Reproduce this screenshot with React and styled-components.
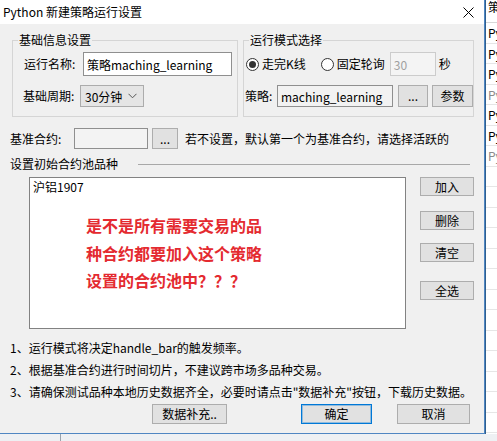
import styled, { createGlobalStyle } from 'styled-components';

const GlobalStyle = createGlobalStyle`
  html, body {
    margin: 0;
    padding: 0;
    background: #ffffff;
  }
  body {
    font-family: "Noto Sans CJK SC", "Noto Sans", sans-serif;
    font-size: 12px;
    color: #000;
  }
`;

const Screen = styled.div`
  width: 497px;
  height: 441px;
  overflow: hidden;
  display: grid;
  grid-template-columns: 485px 12px;
  grid-template-rows: 434px 7px;
`;

const Window = styled.div`
  background: #f0f0f0;
  border-right: 1px solid #4f86c2;
  border-bottom: 1px solid #4f86c2;
  display: flex;
  flex-direction: column;
  overflow: hidden;
`;

const TitleBar = styled.div`
  height: 24px;
  flex: none;
  background: #ffffff;
  display: flex;
  align-items: center;
  justify-content: space-between;
  padding: 0 10px 0 3px;
  line-height: 16px;
`;

const Body = styled.div`
  padding: 0 10px;
  display: flex;
  flex-direction: column;
`;

const TopRow = styled.div`
  display: flex;
  gap: 5px;
  padding-left: 2px;
  margin-top: 16px;
`;

const GroupBox = styled.div`
  box-sizing: border-box;
  width: ${p => p.$w}px;
  height: 77px;
  border: 1px solid #d5d5d5;
  display: flex;
  flex-direction: column;
`;

const Legend = styled.div`
  align-self: flex-start;
  height: 16px;
  line-height: 16px;
  margin: -9px 0 0 5px;
  padding: 0 1px;
  background: #f0f0f0;
`;

const FormRow = styled.div`
  display: flex;
  align-items: center;
  height: ${p => p.$h}px;
  margin-top: ${p => p.$mt}px;
  padding-left: ${p => p.$pl}px;
`;

const Label = styled.span`
  width: ${p => (p.$w ? `${p.$w}px` : 'auto')};
  flex: none;
  white-space: nowrap;
  line-height: 16px;
`;

const TextBox = styled.div`
  box-sizing: border-box;
  width: ${p => p.$w}px;
  height: ${p => p.$h}px;
  border: 1px solid ${p => (p.$light ? '#cccccc' : '#8f8f8f')};
  background: ${p => p.$bg || '#ffffff'};
  color: ${p => (p.$muted ? '#a0a0a0' : '#000')};
  display: flex;
  align-items: center;
  padding-left: 3px;
  white-space: nowrap;
  overflow: hidden;
  flex: none;
`;

const Select = styled.div`
  box-sizing: border-box;
  width: 64px;
  height: 22px;
  border: 1px solid #acacac;
  background: #e5e5e5;
  display: flex;
  align-items: center;
  justify-content: space-between;
  padding: 0 6px 0 4px;
`;

const Button = styled.div`
  box-sizing: border-box;
  width: ${p => p.$w}px;
  height: ${p => p.$h || 20}px;
  margin-left: ${p => p.$ml || 0}px;
  margin-top: ${p => p.$mt || 0}px;
  background: #e1e1e1;
  border: 1px solid ${p => (p.$primary ? '#0078d7' : '#adadad')};
  box-shadow: ${p => (p.$primary ? 'inset 0 0 0 1px rgba(0,120,215,0.35)' : 'none')};
  display: flex;
  align-items: center;
  justify-content: center;
  line-height: 14px;
  white-space: nowrap;
  flex: none;
`;

const Radio = styled.span`
  box-sizing: border-box;
  width: 13px;
  height: 13px;
  border-radius: 50%;
  border: 1px solid #333333;
  background: #ffffff;
  display: inline-flex;
  align-items: center;
  justify-content: center;
  margin-right: 3px;
  flex: none;
  &::after {
    content: '';
    width: 7px;
    height: 7px;
    border-radius: 50%;
    background: ${p => (p.$checked ? '#333333' : 'transparent')};
  }
`;

const RadioItem = styled.div`
  display: flex;
  align-items: center;
  margin-right: ${p => p.$mr}px;
  line-height: 16px;
`;

const Hint = styled.span`
  margin-left: 7px;
  white-space: nowrap;
  line-height: 16px;
`;

const Section = styled.div`
  display: flex;
  align-items: center;
  height: 16px;
  margin-top: 7px;
`;

const Rule = styled.div`
  width: 332px;
  height: 1px;
  margin-left: 20px;
  background: #a8a8a8;
`;

const Pool = styled.div`
  display: flex;
  margin-top: 5px;
  padding-left: 19px;
`;

const ListBox = styled.div`
  box-sizing: border-box;
  width: 377px;
  height: 152px;
  background: #ffffff;
  border: 1px solid #828282;
  padding: 2px 3px;
`;

const ListItem = styled.div`
  line-height: 14px;
`;

const Question = styled.div`
  margin: 18px 0 0 53px;
  color: #e42a30;
  font-weight: 700;
  font-size: 16px;
  line-height: 27.5px;
  width: 180px;
`;

const SideButtons = styled.div`
  display: flex;
  flex-direction: column;
  margin-left: 14px;
`;

const Notes = styled.div`
  margin-top: 8px;
  line-height: 22px;
  white-space: nowrap;
`;

const Footer = styled.div`
  display: flex;
  margin-top: 1px;
  padding-left: 142px;
`;

const SideList = styled.div`
  background: #ffffff;
  overflow: hidden;
  border-left: 1px solid #2f5f8f;
`;

const SideHeader = styled.div`
  height: 22px;
  border-bottom: 1px solid #d8d8d8;
  padding-left: 2px;
  line-height: 14px;
  white-space: nowrap;
`;

const SideRow = styled.div`
  box-sizing: border-box;
  height: 20.5px;
  border-bottom: 1px solid #e6e6e6;
  padding-left: 2px;
  line-height: 20px;
  color: ${p => (p.$grey ? '#8a8a8a' : '#000')};
  white-space: nowrap;
`;

const BottomStrip = styled.div`
  grid-column: 1 / 3;
  background: #eef0f3;
  display: flex;
`;

const StripCell = styled.div`
  width: 60px;
  border-right: 1px solid #9aa3ad;
`;

const Close = () => (
  <svg width="11" height="11" viewBox="0 0 11 11">
    <path d="M0.5 0.5 L10.5 10.5 M10.5 0.5 L0.5 10.5" stroke="#000" strokeWidth="1" fill="none" />
  </svg>
);

const Chevron = () => (
  <svg width="9" height="6" viewBox="0 0 9 6">
    <path d="M0.5 0.8 L4.5 4.8 L8.5 0.8" stroke="#555" strokeWidth="1" fill="none" />
  </svg>
);

const sideItems = [false, false, false, true, false, false, true];

const App = () => {
  return (
    <>
      <GlobalStyle />
      <Screen>
        <Window>
          <TitleBar>
            <span>Python 新建策略运行设置</span>
            <Close />
          </TitleBar>
          <Body>
            <TopRow>
              <GroupBox $w={228}>
                <Legend>基础信息设置</Legend>
                <FormRow $h={24} $mt={4} $pl={11}>
                  <Label $w={59}>运行名称:</Label>
                  <TextBox $w={149} $h={24}>策略maching_learning</TextBox>
                </FormRow>
                <FormRow $h={22} $mt={9} $pl={10}>
                  <Label $w={57}>基础周期:</Label>
                  <Select>
                    <span>30分钟</span>
                    <Chevron />
                  </Select>
                </FormRow>
              </GroupBox>
              <GroupBox $w={231}>
                <Legend>运行模式选择</Legend>
                <FormRow $h={24} $mt={4} $pl={2}>
                  <RadioItem $mr={15}>
                    <Radio $checked />
                    走完K线
                  </RadioItem>
                  <RadioItem $mr={5}>
                    <Radio />
                    固定轮询
                  </RadioItem>
                  <TextBox $w={46} $h={24} $light $muted $bg="#f4f4f4">30</TextBox>
                  <Label style={{ marginLeft: 3 }}>秒</Label>
                </FormRow>
                <FormRow $h={22} $mt={9} $pl={1}>
                  <Label $w={32}>策略:</Label>
                  <TextBox $w={116} $h={22} $bg="#f2f2f2">maching_learning</TextBox>
                  <Button $w={30} $h={22} $ml={5}>...</Button>
                  <Button $w={41} $h={22} $ml={4}>参数</Button>
                </FormRow>
              </GroupBox>
            </TopRow>
            <FormRow $h={21} $mt={11} $pl={0}>
              <Label $w={64}>基准合约:</Label>
              <TextBox $w={74} $h={21} $bg="#f3f3f3" />
              <Button $w={26} $h={21} $ml={4}>...</Button>
              <Hint>若不设置，默认第一个为基准合约，请选择活跃的</Hint>
            </FormRow>
            <Section>
              <Label>设置初始合约池品种</Label>
              <Rule />
            </Section>
            <Pool>
              <ListBox>
                <ListItem>沪铝1907</ListItem>
                <Question>
                  是不是所有需要交易的品
                  <br />
                  种合约都要加入这个策略
                  <br />
                  设置的合约池中？？？
                </Question>
              </ListBox>
              <SideButtons>
                <Button $w={54} $h={19}>加入</Button>
                <Button $w={54} $h={19} $mt={15}>删除</Button>
                <Button $w={54} $h={19} $mt={13}>清空</Button>
                <Button $w={54} $h={19} $mt={19}>全选</Button>
              </SideButtons>
            </Pool>
            <Notes>
              <div>1、运行模式将决定handle_bar的触发频率。</div>
              <div>2、根据基准合约进行时间切片，不建议跨市场多品种交易。</div>
              <div>3、请确保测试品种本地历史数据齐全，必要时请点击"数据补充"按钮，下载历史数据。</div>
            </Notes>
            <Footer>
              <Button $w={75}>数据补充..</Button>
              <Button $w={71} $ml={74} $primary>确定</Button>
              <Button $w={73} $ml={25}>取消</Button>
            </Footer>
          </Body>
        </Window>
        <SideList>
          <SideHeader>策略</SideHeader>
          {sideItems.map((grey, i) => (
            <SideRow key={i} $grey={grey}>Python</SideRow>
          ))}
          {Array.from({ length: 14 }).map((_, i) => (
            <SideRow key={`e${i}`} />
          ))}
        </SideList>
        <BottomStrip>
          <StripCell />
        </BottomStrip>
      </Screen>
    </>
  );
};

export default App;
